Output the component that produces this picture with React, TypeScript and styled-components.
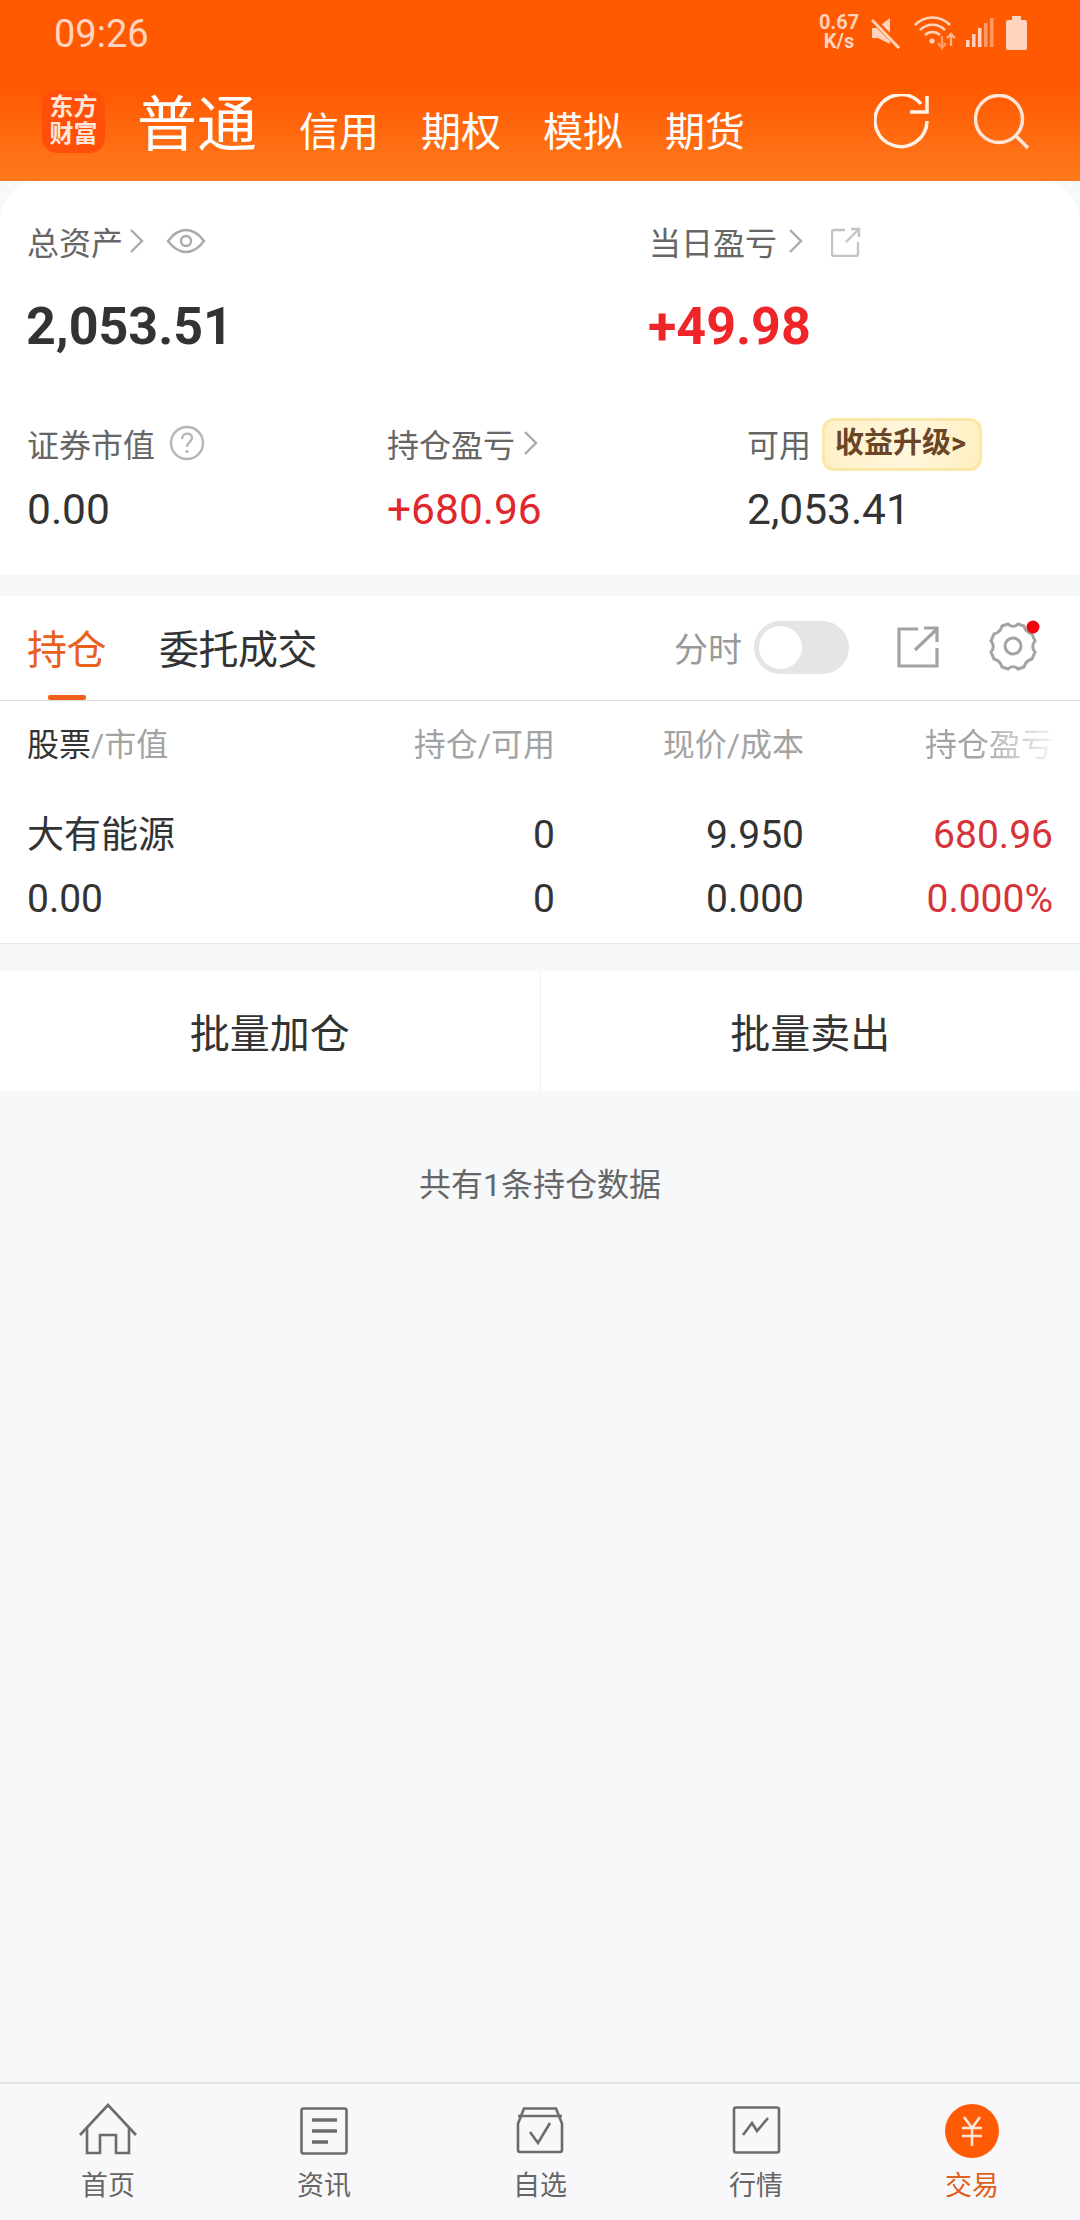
import React from 'react';
import styled, { createGlobalStyle } from 'styled-components';

const GlobalStyle = createGlobalStyle`
  html, body {
    margin: 0;
    padding: 0;
    background: #f7f8fa;
  }
  * {
    box-sizing: border-box;
  }
`;

const Page = styled.div`
  width: 1080px;
  height: 2220px;
  display: flex;
  flex-direction: column;
  background: #f7f8fa;
  font-family: Roboto, 'Noto Sans CJK SC', sans-serif;
  color: #333;
  overflow: hidden;
`;

const Header = styled.header`
  height: 181px;
  flex-shrink: 0;
  background: linear-gradient(180deg, #ff5a00 0%, #ff5a02 50%, #ff7a1e 100%);
`;

const StatusBar = styled.div`
  height: 66px;
  display: flex;
  align-items: center;
  padding: 0 53px 0 54px;
  color: #ffd3bd;
`;

const Clock = styled.div`
  font-size: 38px;
  flex: 1;
  padding-top: 2px;
`;

const Speed = styled.div`
  font-size: 20px;
  font-weight: 700;
  line-height: 19px;
  text-align: center;
  width: 44px;
  margin-right: 10px;
  margin-top: -2px;
`;

const StatusIcon = styled.svg<{ $gap?: number }>`
  display: block;
  margin-right: ${(p) => p.$gap ?? 0}px;
  fill: none;
`;

const NavBar = styled.div`
  display: flex;
  align-items: flex-start;
  padding: 24px 0 0 42px;
  color: #fff;
`;

const Logo = styled.div`
  width: 63px;
  height: 63px;
  border-radius: 15px;
  background: #ff4f08;
  color: #ffe6d8;
  font-size: 24px;
  font-weight: 700;
  line-height: 27px;
  text-align: center;
  padding-top: 4px;
  margin-right: 32px;
`;

const AccountTabs = styled.div`
  display: flex;
  align-items: baseline;
  gap: 42px;
  height: 70px;
  flex: 1;
  padding-top: 3px;
`;

const AccountTab = styled.div<{ $active?: boolean }>`
  font-size: ${(p) => (p.$active ? 60 : 40)}px;
  line-height: 66px;
  margin-right: ${(p) => (p.$active ? 0 : 0)}px;
`;

const HeaderIcons = styled.div`
  display: flex;
  gap: 44px;
  padding-right: 50px;
  margin-top: 4px;
`;

const SummaryCard = styled.section`
  background: #fff;
  border-radius: 40px 40px 0 0;
  padding: 40px 0 0 27px;
  height: 394px;
  flex-shrink: 0;
`;

const TopGrid = styled.div`
  display: grid;
  grid-template-columns: 622px 1fr;
`;

const BottomGrid = styled.div`
  display: grid;
  grid-template-columns: 360px 360px 1fr;
  margin-top: 66px;
`;

const Label = styled.div`
  display: flex;
  align-items: center;
  height: 40px;
  font-size: 32px;
  color: #666;
`;

const LabelIcon = styled.svg<{ $left?: number; $top?: number }>`
  margin-left: ${(p) => p.$left ?? 0}px;
  margin-top: ${(p) => p.$top ?? 0}px;
  fill: none;
  flex-shrink: 0;
`;

const BigValue = styled.div<{ $red?: boolean }>`
  margin-top: 36px;
  margin-left: -1px;
  height: 60px;
  line-height: 60px;
  font-size: 52px;
  font-weight: 700;
  color: ${(p) => (p.$red ? '#ee2529' : '#333')};
`;

const SmallValue = styled.div<{ $red?: boolean }>`
  margin-top: 22px;
  height: 50px;
  line-height: 50px;
  font-size: 42.5px;
  color: ${(p) => (p.$red ? '#e0272d' : '#333')};
`;

const UpgradeBadge = styled.div`
  margin-left: 11px;
  margin-top: 3px;
  width: 160px;
  height: 53px;
  border-radius: 12px;
  border: 3px solid #fbe8a8;
  background: linear-gradient(100deg, #fff0c8 0%, #fff6dc 55%, #ffefc0 100%);
  color: #6b4525;
  font-size: 29px;
  font-weight: 700;
  line-height: 44px;
  padding-left: 10px;
  white-space: nowrap;
`;

const Positions = styled.section`
  margin-top: 21px;
  background: #fff;
  height: 348px;
  flex-shrink: 0;
  border-bottom: 1px solid #e9e9ec;
`;

const TabBar = styled.div`
  height: 105px;
  display: flex;
  align-items: center;
  padding: 0 0 2px 27px;
  border-bottom: 1px solid #dddddf;
  position: relative;
`;

const TabItem = styled.div<{ $active?: boolean }>`
  font-size: 40px;
  margin-right: 53px;
  letter-spacing: -0.5px;
  color: ${(p) => (p.$active ? '#e8601c' : '#333')};
`;

const TabUnderline = styled.div`
  position: absolute;
  left: 48px;
  bottom: 0;
  width: 38px;
  height: 5px;
  border-radius: 2px;
  background: #f0601a;
`;

const TabTools = styled.div`
  margin-left: auto;
  display: flex;
  align-items: center;
`;

const ToolLabel = styled.div`
  font-size: 34px;
  color: #999;
  margin-right: 12px;
`;

const Toggle = styled.div`
  width: 95px;
  height: 53px;
  border-radius: 27px;
  background: #e4e5e7;
  padding: 5px;
  margin-right: 48px;
`;

const ToggleKnob = styled.div`
  width: 43px;
  height: 43px;
  border-radius: 50%;
  background: #fff;
`;

const ShareIcon = styled.svg`
  display: block;
  fill: none;
  stroke: #a3a3a3;
  stroke-width: 3.2;
  margin-right: 45px;
`;

const GearIcon = styled.svg`
  display: block;
  fill: none;
  stroke: #a3a3a3;
  stroke-width: 3;
  margin-right: 38px;
`;

const PositionGrid = styled.div`
  display: grid;
  grid-template-columns: 328px 200px 249px 249px;
  padding: 0 27px;
`;

const HeaderRow = styled(PositionGrid)`
  height: 82px;
  align-items: center;
  font-size: 32px;
  color: #a3a3a3;
  margin-bottom: 20px;
`;

const HeaderCell = styled.div<{ $fade?: boolean }>`
  text-align: right;
  &:first-child {
    text-align: left;
  }
  b {
    font-weight: 400;
    color: #333;
  }
  ${(p) =>
    p.$fade &&
    `
    -webkit-mask-image: linear-gradient(90deg, #000 0, #000 172px, rgba(0,0,0,.12) 249px);
    mask-image: linear-gradient(90deg, #000 0, #000 172px, rgba(0,0,0,.12) 249px);
  `}
`;

const DataRow = styled(PositionGrid)`
  height: 64px;
  align-items: center;
  color: #333;
`;

const DataCell = styled.div<{ $red?: boolean; $name?: boolean }>`
  text-align: ${(p) => (p.$name ? 'left' : 'right')};
  font-size: 39px;
  color: ${(p) => (p.$red ? '#d6333a' : '#333')};
`;

const StockName = styled.div`
  font-size: 37px;
  padding-bottom: 6px;
`;

const BatchBar = styled.div`
  margin-top: 27px;
  display: flex;
  height: 120px;
  flex-shrink: 0;
  background: #fff;
`;

const BatchButton = styled.div`
  flex: 1;
  display: flex;
  align-items: center;
  justify-content: center;
  font-size: 40px;
  color: #333;
  & + & {
    border-left: 1px solid #f1f1f3;
  }
`;

const ListNote = styled.div`
  flex: 1;
  padding-top: 74px;
  text-align: center;
  font-size: 32px;
  line-height: 40px;
  color: #666;
`;

const BottomNav = styled.nav`
  height: 138px;
  flex-shrink: 0;
  display: grid;
  grid-template-columns: repeat(5, 1fr);
  padding-top: 17px;
  border-top: 2px solid #e5e5e8;
  background: #f8f8fa;
`;

const NavItem = styled.div<{ $active?: boolean }>`
  display: flex;
  flex-direction: column;
  align-items: center;
  font-size: 27px;
  color: ${(p) => (p.$active ? '#e0601c' : '#666')};
`;

const NavIcon = styled.svg`
  display: block;
  fill: none;
  stroke: #6c6c6c;
  stroke-width: 2.6;
  margin-bottom: 9px;
`;

const NavLabel = styled.div`
  line-height: 36px;
`;

const Chevron = ({ left = 6 }: { left?: number }) => (
  <LabelIcon $left={left} width="16" height="26" viewBox="0 0 16 26">
    <path d="M2 2l11 11L2 24" stroke="#aaa" strokeWidth="2.4" />
  </LabelIcon>
);

const StatusIcons = () => (
  <>
    <Speed>
      0.67
      <br />
      K/s
    </Speed>
    <StatusIcon $gap={13} width="30" height="32" viewBox="0 0 30 32">
      <path d="M1 11h5L19 1v26l-6-3-6-3H1z" fill="#ffd3bd" />
      <path d="M1 2l28 28" stroke="#ff5a00" strokeWidth="6" />
      <path d="M1 3l27 28" stroke="#ffd3bd" strokeWidth="3" />
    </StatusIcon>
    <StatusIcon $gap={10} width="42" height="34" viewBox="0 0 42 34">
      <path d="M1 9c10-10 25-10 35 0M6 14c7-7 18-7 25 0M11 19c4-4 11-4 15 0" stroke="#ffd3bd" strokeWidth="2.6" />
      <circle cx="18" cy="25" r="2.6" fill="#ffd3bd" />
      <path d="M28 20v11M24 27l4 5 4-5" stroke="#ff9a66" strokeWidth="2.4" />
      <path d="M37 30v-12M33 22l4-4 4 4" stroke="#ffb48c" strokeWidth="2.4" />
    </StatusIcon>
    <StatusIcon $gap={12} width="28" height="30" viewBox="0 0 28 30">
      <rect x="0" y="22" width="3.5" height="7" fill="#ffd3bd" />
      <rect x="6" y="16" width="3.5" height="13" fill="#ffd3bd" />
      <rect x="12" y="10" width="3.5" height="19" fill="#ffd3bd" />
      <rect x="18" y="5" width="3.5" height="24" fill="#ff9a66" />
      <rect x="24" y="0" width="3.5" height="29" fill="#ff9a66" />
    </StatusIcon>
    <StatusIcon width="21" height="34" viewBox="0 0 21 34">
      <path d="M6 0h9v4h4a2 2 0 012 2v26a2 2 0 01-2 2H2a2 2 0 01-2-2V6a2 2 0 012-2h4z" fill="#ffd3bd" />
    </StatusIcon>
  </>
);

const navItems = [
  {
    label: '首页',
    icon: <path d="M2 34L30 4l28 30M9 26v26h13V34h16v18h13V26" />,
  },
  {
    label: '资讯',
    icon: (
      <>
        <rect x="7.5" y="7.5" width="45" height="45" rx="2" />
        <path d="M18 19h25M18 30h25M18 41h16" strokeWidth="3.5" />
      </>
    ),
  },
  {
    label: '自选',
    icon: (
      <>
        <path d="M14 7.5h32l6 15V49a2 2 0 01-2 2H10a2 2 0 01-2-2V22.5zM8 15h44" />
        <path d="M20 31l8 11 12-20" />
      </>
    ),
  },
  {
    label: '行情',
    icon: (
      <>
        <rect x="8" y="6.5" width="45" height="45" rx="2" />
        <path d="M17 34l9-12 5 8 11-13" />
      </>
    ),
  },
];

const App = () => {
  return (
    <Page>
      <GlobalStyle />
      <Header>
        <StatusBar>
          <Clock>09:26</Clock>
          <StatusIcons />
        </StatusBar>
        <NavBar>
          <Logo>
            东方
            <br />
            财富
          </Logo>
          <AccountTabs>
            <AccountTab $active>普通</AccountTab>
            <AccountTab>信用</AccountTab>
            <AccountTab>期权</AccountTab>
            <AccountTab>模拟</AccountTab>
            <AccountTab>期货</AccountTab>
          </AccountTabs>
          <HeaderIcons>
            <svg width="56" height="56" viewBox="0 0 56 56" fill="none" stroke="#fff3ea" strokeWidth="3.5">
              <path d="M53 27A26 26 0 1 1 47 10" />
              <path d="M53 2v16H36" />
            </svg>
            <svg width="56" height="56" viewBox="0 0 56 56" fill="none" stroke="#ffe6d8" strokeWidth="3.5">
              <circle cx="25" cy="25" r="23.5" />
              <path d="M42 42l12 12" />
            </svg>
          </HeaderIcons>
        </NavBar>
      </Header>

      <SummaryCard>
        <TopGrid>
          <div>
            <Label>
              总资产
              <Chevron />
              <LabelIcon $left={21} width="40" height="26" viewBox="0 0 40 26">
                <path d="M2 13C8 5 14 2 20 2s12 3 18 11c-6 8-12 11-18 11S8 21 2 13z" stroke="#aaa" strokeWidth="2.4" />
                <circle cx="20" cy="13" r="5" stroke="#aaa" strokeWidth="2.4" />
              </LabelIcon>
            </Label>
            <BigValue>2,053.51</BigValue>
          </div>
          <div>
            <Label>
              当日盈亏
              <Chevron left={11} />
              <LabelIcon $left={27} $top={2} width="30" height="30" viewBox="0 0 30 30">
                <path d="M14 3H3a2 2 0 00-2 2v22a2 2 0 002 2h22a2 2 0 002-2V15M15 15L28 2M20 2h8v8" stroke="#c4c4c4" strokeWidth="2.4" />
              </LabelIcon>
            </Label>
            <BigValue $red>+49.98</BigValue>
          </div>
        </TopGrid>
        <BottomGrid>
          <div>
            <Label>
              证券市值
              <LabelIcon $left={14} width="36" height="36" viewBox="0 0 36 36">
                <circle cx="18" cy="18" r="16" stroke="#b5b5b5" strokeWidth="2.4" />
                <path d="M13 14c0-7 10-7 10-1 0 4-5 4-5 9" stroke="#b5b5b5" strokeWidth="2.4" />
                <circle cx="18" cy="26.5" r="1.6" fill="#b5b5b5" />
              </LabelIcon>
            </Label>
            <SmallValue>0.00</SmallValue>
          </div>
          <div>
            <Label>
              持仓盈亏
              <Chevron left={8} />
            </Label>
            <SmallValue $red>+680.96</SmallValue>
          </div>
          <div>
            <Label>
              可用
              <UpgradeBadge>收益升级&gt;</UpgradeBadge>
            </Label>
            <SmallValue>2,053.41</SmallValue>
          </div>
        </BottomGrid>
      </SummaryCard>

      <Positions>
        <TabBar>
          <TabItem $active>持仓</TabItem>
          <TabItem>委托成交</TabItem>
          <TabUnderline />
          <TabTools>
            <ToolLabel>分时</ToolLabel>
            <Toggle>
              <ToggleKnob />
            </Toggle>
            <ShareIcon width="42" height="42" viewBox="0 0 42 42">
              <path d="M21 3H2v37h38V22M18 24L40 3M27 2h13v14" />
            </ShareIcon>
            <GearIcon width="58" height="54" viewBox="0 0 58 54">
              <path d="M24 5c3 3 7 3 10 0l6 2c1 4 4 7 8 8l3 7c-3 3-3 8 0 11l-3 7c-4 1-7 4-8 8l-6 2c-3-3-7-3-10 0l-6-2c-1-4-4-7-8-8l-3-7c3-3 3-8 0-11l3-7c4-1 7-4 8-8z" transform="translate(0 -1)" />
              <circle cx="29" cy="26" r="8" />
              <circle cx="49" cy="7" r="6.5" fill="#f5000f" stroke="none" />
            </GearIcon>
          </TabTools>
        </TabBar>
        <HeaderRow>
          <HeaderCell>
            <b>股票</b>/市值
          </HeaderCell>
          <HeaderCell>持仓/可用</HeaderCell>
          <HeaderCell>现价/成本</HeaderCell>
          <HeaderCell $fade>持仓盈亏</HeaderCell>
        </HeaderRow>
        <DataRow>
          <StockName>大有能源</StockName>
          <DataCell>0</DataCell>
          <DataCell>9.950</DataCell>
          <DataCell $red>680.96</DataCell>
        </DataRow>
        <DataRow>
          <DataCell $name>0.00</DataCell>
          <DataCell>0</DataCell>
          <DataCell>0.000</DataCell>
          <DataCell $red>0.000%</DataCell>
        </DataRow>
      </Positions>

      <BatchBar>
        <BatchButton>批量加仓</BatchButton>
        <BatchButton>批量卖出</BatchButton>
      </BatchBar>

      <ListNote>共有1条持仓数据</ListNote>

      <BottomNav>
        {navItems.map((item) => (
          <NavItem key={item.label}>
            <NavIcon width="60" height="58" viewBox="0 0 60 58">
              {item.icon}
            </NavIcon>
            <NavLabel>{item.label}</NavLabel>
          </NavItem>
        ))}
        <NavItem $active>
          <NavIcon width="60" height="58" viewBox="0 0 60 58">
            <circle cx="30" cy="30" r="27" fill="#ff5a05" stroke="none" />
            <path d="M22 16l8 11 8-11M20 27h20M20 35h20M30 27v18" stroke="#ffe6d8" strokeWidth="2.6" />
          </NavIcon>
          <NavLabel>交易</NavLabel>
        </NavItem>
      </BottomNav>
    </Page>
  );
};

export default App;
